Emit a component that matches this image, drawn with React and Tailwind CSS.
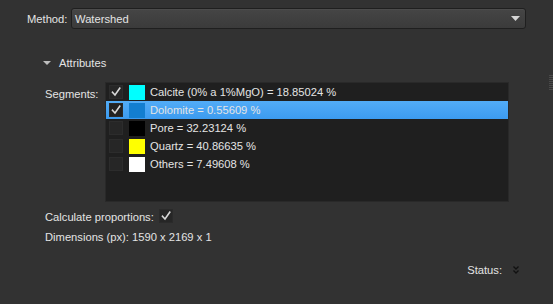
import React from 'react';

const segments = [
  { checked: true, color: 'bg-[#00ffff]', label: 'Calcite (0% a 1%MgO) = 18.85024 %' },
  { checked: true, color: 'bg-[#137ed0]', label: 'Dolomite = 0.55609 %', selected: true },
  { checked: false, color: 'bg-black', label: 'Pore = 32.23124 %' },
  { checked: false, color: 'bg-[#ffff00]', label: 'Quartz = 40.86635 %' },
  { checked: false, color: 'bg-white', label: 'Others = 7.49608 %' },
];

const Check = () => (
  <svg width="10" height="10" viewBox="0 0 10 10" fill="none">
    <path d="M1.5 5.2 L4 8 L8.8 1.2" stroke="#d8d8d8" strokeWidth="1.6" strokeLinecap="square" />
  </svg>
);

const CheckBox = ({ checked, dark }) => (
  <div
    className={`w-[14px] h-[14px] flex items-center justify-center ${
      dark ? 'bg-[#222222] border border-[#2a2a2a]' : 'bg-[#262626] border border-[#2c2c2c]'
    }`}
  >
    {checked && <Check />}
  </div>
);

export default function App() {
  return (
    <div
      className="w-[553px] h-[304px] bg-[#323232] text-[#e4e4e4] text-[11.2px] leading-[18px] overflow-hidden flex flex-col"
      style={{ fontFamily: '"Liberation Sans", Arial, sans-serif' }}
    >
      {/* Method */}
      <div className="flex items-center pt-[8px] pl-[27px] pr-[27px]">
        <span className="w-[44px]">Method:</span>
        <div className="flex-1 h-[21px] rounded-[3px] border border-[#1f1f1f] bg-gradient-to-b from-[#454545] to-[#3b3b3b] shadow-[inset_0_1px_0_#4c4c4c] flex items-center pl-[3px] pr-[5px]">
          <span className="flex-1">Watershed</span>
          <svg width="9" height="5" viewBox="0 0 9 5">
            <path d="M0 0 H9 L4.5 5 Z" fill="#d6d6d6" />
          </svg>
        </div>
      </div>

      {/* Attributes header */}
      <div className="flex items-center h-[16px] mt-[26px] pl-[43px]">
        <svg width="8" height="4" viewBox="0 0 8 4" className="mr-[8px]">
          <path d="M0 0 H8 L4 4 Z" fill="#bdbdbd" />
        </svg>
        <span>Attributes</span>
      </div>

      {/* Segments */}
      <div className="flex mt-[11px] pl-[45px]">
        <span className="w-[60px] mt-[3px]">Segments:</span>
        <div className="w-[404px] h-[120px] bg-[#1f1f1f] border border-[#292929]">
          {segments.map((s) => (
            <div
              key={s.label}
              className={`flex items-center h-[18px] pl-[3px] ${
                s.selected ? 'bg-gradient-to-b from-[#52acf7] to-[#3c9bf0]' : ''
              }`}
            >
              <CheckBox checked={s.checked} dark={s.selected} />
              <div className={`w-[16px] h-[15px] ml-[6px] ${s.color}`} />
              <span className="ml-[5px] whitespace-nowrap">{s.label}</span>
            </div>
          ))}
        </div>
        <div className="ml-auto mt-[-7px] w-[4px] h-[16px] bg-[repeating-linear-gradient(180deg,#4a4a4a_0_1px,transparent_1px_2px)]" />
      </div>

      {/* Calculate proportions */}
      <div className="flex items-center h-[18px] mt-[5px] pl-[45px]">
        <span className="mr-[5px] mt-[2px]">Calculate proportions:</span>
        <div className="w-[14px] h-[14px] bg-[#262626] border border-[#2a2a2a] flex items-center justify-center">
          <Check />
        </div>
      </div>

      {/* Dimensions */}
      <div className="flex items-center h-[18px] mt-[3px] pl-[45px]">
        <span className="w-[87px]">Dimensions (px):</span>
        <span>1590 x 2169 x 1</span>
      </div>

      {/* Status */}
      <div className="flex items-center justify-end h-[18px] mt-[15px] pr-[34px]">
        <span className="mr-[11px]">Status:</span>
        <svg width="6" height="8" viewBox="0 0 6 8" fill="none">
          <path d="M0.5 0.5 L3 3 L5.5 0.5 M0.5 4.5 L3 7 L5.5 4.5" stroke="#111111" strokeWidth="1.3" />
        </svg>
      </div>
    </div>
  );
}
